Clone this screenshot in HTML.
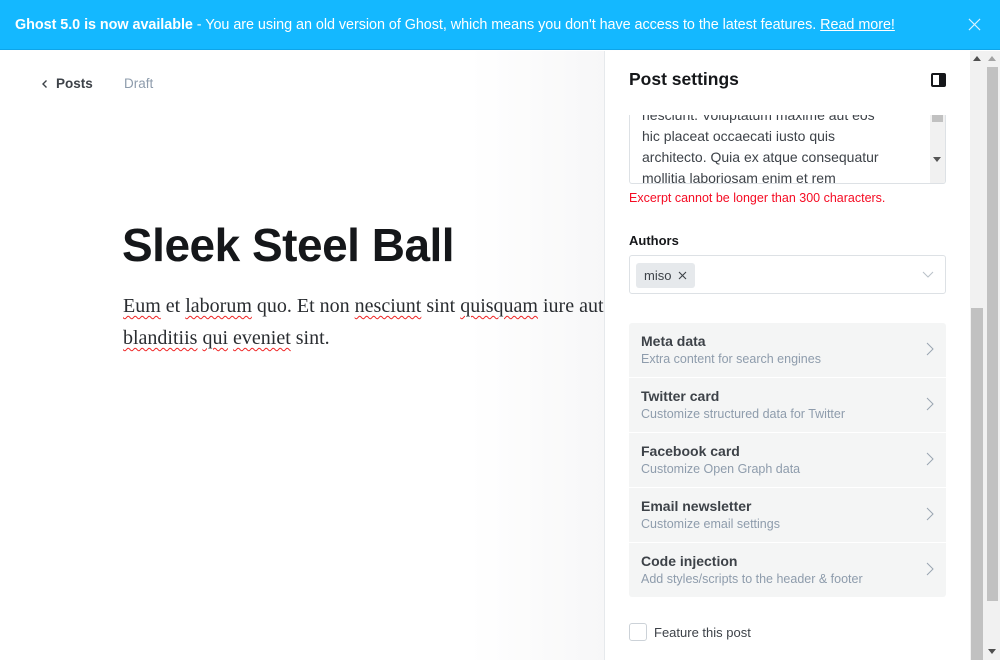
<!DOCTYPE html>
<html><head><meta charset="utf-8"><style>
*{box-sizing:border-box;margin:0;padding:0}
body{width:1000px;height:660px;overflow:hidden;font-family:"Liberation Sans","DejaVu Sans",sans-serif;background:#fff;position:relative;color:#15171a}
.banner{position:absolute;left:0;top:0;width:1000px;height:50px;background:#14b8ff;border-bottom:1px solid #0ea5e9;color:#fff;font-size:14.4px;line-height:50px;padding-left:15px;letter-spacing:-0.05px}
.banner b{font-weight:700}
.banner u{text-decoration:underline}
.close{position:absolute;right:19px;top:18px;width:13px;height:13px}
.left{position:absolute;left:0;top:51px;width:604px;height:609px;background:linear-gradient(90deg,#fff 0,#fff 470px,#f7f7f8 604px)}
.nav{position:absolute;top:76px;left:41px;font-size:13.5px}
.nav .p{position:absolute;left:15px;top:0;font-weight:700;color:#3d4248}
.nav .d{position:absolute;left:83px;top:0;color:#8e9cac}
h1{position:absolute;left:122px;top:218px;font-size:46px;font-weight:700;letter-spacing:-0.5px;color:#15171a;white-space:nowrap}
.body{position:absolute;left:123px;top:290px;width:600px;font-family:"Liberation Serif",serif;font-size:20px;line-height:32px;color:#2a2d31;white-space:nowrap}
.sp{text-decoration:underline wavy #e22;text-decoration-thickness:1px;text-underline-offset:3px}
.panel{position:absolute;left:604px;top:51px;width:366px;height:609px;background:#fff;border-left:1px solid #e6e9ec}
.ps{position:absolute;left:24px;top:18px;font-size:17.5px;font-weight:700;color:#15171a}
.ico{position:absolute;left:326px;top:22px;width:15px;height:14px;border:2px solid #15171a;border-radius:2px}
.ico:after{content:"";position:absolute;right:0;top:0;width:5px;height:10px;background:#15171a}
.ta{position:absolute;left:24px;top:64px;width:317px;height:69px;border:1px solid #dde1e5;border-top:none;border-radius:0 0 3px 3px;overflow:hidden;font-size:14px;line-height:21px;color:#3d4248}
.ta .t{position:absolute;left:12px;top:-10px}
.ta .sb{position:absolute;right:0;top:0;width:15px;height:69px;background:#f1f1f1}
.err{position:absolute;left:24px;top:140px;font-size:12.5px;color:#f50b23}
.lab{position:absolute;left:24px;top:182px;font-size:13px;font-weight:700;color:#15171a}
.auth{position:absolute;left:24px;top:204px;width:317px;height:39px;border:1px solid #dde1e5;border-radius:3px}
.tag{position:absolute;left:6px;top:7px;width:59px;height:25px;background:#e6e9ec;border-radius:3px;font-size:13px;line-height:25px;padding-left:8px;color:#3d4248}
.list{position:absolute;left:24px;top:272px;width:317px}
.it{height:54px;background:#f4f5f5;margin-bottom:1px;position:relative;padding:10px 0 0 12px}
.it:first-child{border-radius:3px 3px 0 0}.it:last-child{border-radius:0 0 3px 3px}
.it b{display:block;font-size:14px;color:#3d4248}
.it span{display:block;font-size:12.5px;color:#8e9cac;margin-top:3px}
.it svg{position:absolute;right:12px;top:19px}
.feat{position:absolute;left:24px;top:572px;font-size:13px;color:#3d4248}
.cb{position:absolute;left:0;top:0;width:18px;height:18px;border:1px solid #ccd2d8;border-radius:3px}
.feat span{position:absolute;left:25px;top:2px;white-space:nowrap}
.sc1{position:absolute;left:970px;top:51px;width:15px;height:609px;background:#f1f1f1}
.sc1 i{position:absolute;left:1px;top:257px;width:12px;height:352px;background:#c1c1c1}
.sc2{position:absolute;left:985px;top:51px;width:15px;height:609px;background:#f1f1f1}
.sc2 i{position:absolute;left:2px;top:16px;width:11px;height:534px;background:#c1c1c1}
.tri{position:absolute;width:0;height:0;border-left:4px solid transparent;border-right:4px solid transparent}
</style></head><body>
<div class="banner"><b>Ghost 5.0 is now available</b> - You are using an old version of Ghost, which means you don't have access to the latest features. <u>Read more!</u>
<svg class="close" viewBox="0 0 14 14"><path d="M1 1L13 13M13 1L1 13" stroke="#d8f3ff" stroke-width="1.2"/></svg></div>
<div class="left"></div>
<div class="nav"><svg width="8" height="10" viewBox="0 0 8 10" style="position:absolute;left:0;top:3px"><path d="M5.5 1.5L2 5l3.5 3.5" stroke="#3d4248" stroke-width="1.4" fill="none"/></svg><span class="p">Posts</span><span class="d">Draft</span></div>
<h1>Sleek Steel Ball</h1>
<div class="body"><span class="sp">Eum</span> et <span class="sp">laborum</span> quo. Et non <span class="sp">nesciunt</span> sint <span class="sp">quisquam</span> iure aut<br><span class="sp">blanditiis</span> <span class="sp">qui</span> <span class="sp">eveniet</span> sint.</div>
<div class="panel">
<div class="ps">Post settings</div><div class="ico"></div>
<div class="ta"><div class="t">nesciunt. Voluptatum maxime aut eos<br>hic placeat occaecati iusto quis<br>architecto. Quia ex atque consequatur<br>mollitia laboriosam enim et rem</div>
<div class="sb"><div style="position:absolute;left:2px;top:0;width:11px;height:7px;background:#c1c1c1"></div><div class="tri" style="left:3px;top:42px;border-top:5px solid #555"></div></div></div>
<div class="err">Excerpt cannot be longer than 300 characters.</div>
<div class="lab">Authors</div>
<div class="auth"><div class="tag">miso <svg width="9" height="9" viewBox="0 0 9 9" style="margin-left:3px"><path d="M1 1L8 8M8 1L1 8" stroke="#3d4248" stroke-width="1.1"/></svg></div>
<svg width="12" height="7" viewBox="0 0 12 7" style="position:absolute;right:11px;top:15px"><path d="M1 1l5 5 5-5" stroke="#bbc2ca" stroke-width="1.1" fill="none"/></svg></div>
<div class="list">
<div class="it"><b>Meta data</b><span>Extra content for search engines</span><svg width="8" height="14" viewBox="0 0 8 14"><path d="M1 1l6 6-6 6" stroke="#9aa5b1" stroke-width="1" fill="none"/></svg></div>
<div class="it"><b>Twitter card</b><span>Customize structured data for Twitter</span><svg width="8" height="14" viewBox="0 0 8 14"><path d="M1 1l6 6-6 6" stroke="#9aa5b1" stroke-width="1" fill="none"/></svg></div>
<div class="it"><b>Facebook card</b><span>Customize Open Graph data</span><svg width="8" height="14" viewBox="0 0 8 14"><path d="M1 1l6 6-6 6" stroke="#9aa5b1" stroke-width="1" fill="none"/></svg></div>
<div class="it"><b>Email newsletter</b><span>Customize email settings</span><svg width="8" height="14" viewBox="0 0 8 14"><path d="M1 1l6 6-6 6" stroke="#9aa5b1" stroke-width="1" fill="none"/></svg></div>
<div class="it"><b>Code injection</b><span>Add styles/scripts to the header &amp; footer</span><svg width="8" height="14" viewBox="0 0 8 14"><path d="M1 1l6 6-6 6" stroke="#9aa5b1" stroke-width="1" fill="none"/></svg></div>
</div>
<div class="feat"><div class="cb"></div><span>Feature this post</span></div>
</div>
<div class="sc1"><i></i><div class="tri" style="left:3px;top:5px;border-bottom:5px solid #505050"></div></div>
<div class="sc2"><i></i><div class="tri" style="left:3px;top:5px;border-bottom:5px solid #a3a3a3"></div><div class="tri" style="left:3px;top:598px;border-top:5px solid #505050"></div></div>
</body></html>
